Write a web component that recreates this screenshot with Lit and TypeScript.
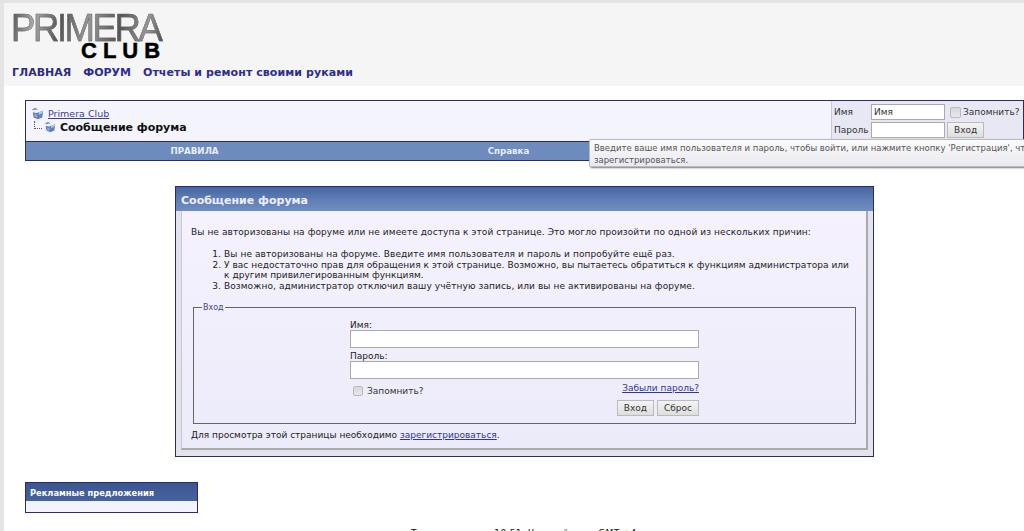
import { LitElement, html, css } from "lit";
import { customElement } from "lit/decorators.js";

const folder = html`<svg class="ico" viewBox="0 0 15 15" width="15" height="15"><path d="M1 3l4-2 3 2-3 2z" fill="#7f93b5"/><path d="M2 6l4 1 3-1 5-2-1 8-5 2-5-2z" fill="#5f83bd"/><path d="M9 6l5-2-1 3-4 2z" fill="#b9cbe6"/><path d="M3 4l3-1 3 2-3 1z" fill="#eef2fa"/><path d="M4 8l3 1v3l-3-1z" fill="#8eaad6"/></svg>`;

@customElement("app-root")
export class AppRoot extends LitElement {
  static styles = css`
    :host {
      display: block;
      height: 531px;
      overflow: hidden;
      background: #fff;
      font-family: "DejaVu Sans", Verdana, sans-serif;
      font-size: 9px;
      color: #222;
      box-sizing: border-box;
      position: relative;
      border-left: 4px solid #e4e4e4;
      border-top: 3px solid #e4e4e4;
    }
    a { color: #33339a; text-decoration: underline; }

    .head { background: #f5f5f5; height: 83px; padding: 10px 0 0 7px; box-sizing: border-box; margin-bottom: 14px; }
    .logo { width: 160px; height: 48px; box-sizing: border-box; padding-top: 1px; display: flex; flex-direction: column; font-family: "Liberation Sans", Arial, sans-serif; }
    .primera {
      font-size: 38px; line-height: 28px; letter-spacing: -2.5px; height: 28px; font-weight: 400;
      background: linear-gradient(100deg, #555 0%, #aaa 15%, #555 32%, #999 50%, #555 70%, #999 88%, #444 100%);
      -webkit-background-clip: text; background-clip: text; color: transparent; white-space: nowrap;
      -webkit-text-stroke: 0.5px #6a6a6a;
      transform: scaleX(0.96); transform-origin: left;
    }
    .club { font-size: 22px; font-weight: 700; line-height: 17px; letter-spacing: 6px; color: #000; margin-left: 70px; white-space: nowrap; -webkit-text-stroke: 0.5px #000; }
    .nav { display: flex; gap: 12px; margin: 5px 0 0 1px; font-size: 11px; font-weight: 700; color: #2d2d77; line-height: 14px; }
    .nav .light { color: #2d2d8e; }
    .nav .wide { letter-spacing: .07px; }

    .top { margin: 0 0 0 21px; width: 999px; border: 1px solid #2b2b66; box-sizing: border-box; }
    .crumb { display: flex; height: 40px; background: #f4f4fd; border-bottom: 1px solid #2b2b66; }
    .path { flex: 1; padding: 6px 0 0 5px; font-size: 9.5px; }
    .path a { color: #3f3f8f; }
    .row { display: flex; align-items: center; height: 13px; }
    .row .ico { margin-right: 4px; width: 13px; height: 13px; }
    .row2 { font-size: 11px; font-weight: 700; color: #111; margin-left: 3px; height: 14px; letter-spacing: -.03px; }
    .row2 .ico { margin-right: 4px; width: 12px; height: 12px; }
    .tree { width: 8px; height: 8px; border-left: 1px dotted #555; border-bottom: 1px dotted #555; margin: 0 2px 4px 0; box-sizing: border-box; }
    .login { width: 192px; background: #e8e8f5; border-left: 1px solid #c8c8d8; padding: 2px 0 0 2px; box-sizing: border-box; display: grid; grid-template-columns: 37px 74px auto; grid-auto-rows: 18px; align-items: center; color: #333; }
    .login input[type="text"] { width: 74px; height: 16px; }
    .login .cb { display: flex; align-items: center; gap: 2px; margin-left: 5px; white-space: nowrap; }
    .login .cb input { width: 11px; height: 11px; }
    input[type="text"] { box-sizing: border-box; border: 1px solid #aaa; background: #fff; padding: 0 2px; margin: 0; font: 9px "DejaVu Sans", sans-serif; color: #333; }
    input[type="checkbox"] { appearance: none; -webkit-appearance: none; margin: 0; width: 10px; height: 10px; box-sizing: border-box; border: 1px solid #b8b8c0; border-radius: 2px; background: linear-gradient(#d8d8dc, #e8e8ec); }
    .btn { box-sizing: border-box; border: 1px solid #bbb; background: linear-gradient(#f4f4f4, #dedede); height: 16px; padding: 0 6px; font: 9px "DejaVu Sans", sans-serif; color: #333; margin: 0; }
    .login .btn { margin-left: 2px; width: 37px; }
    .menu { display: grid; grid-template-columns: 337px 291px 1fr; background: #6d8bbd; height: 18px; color: #e8eef8; font-weight: 700; font-size: 8.7px; line-height: 18px; text-align: center; }

    .tip {
      position: absolute; left: 585px; top: 136px; width: 500px; height: 28px; box-sizing: border-box;
      padding: 2px 4px; background: linear-gradient(#fbfbfb, #e9e9f0); border: 1px solid #bbb; border-radius: 2px 0 0 2px;
      box-shadow: 1px 1px 2px #777; line-height: 12px; color: #555; font-size: 8.5px; white-space: nowrap;
    }

    .panel { width: 699px; margin: 25px 0 0 171px; border: 1px solid #2b2b66; box-sizing: border-box; background: #e3e3ee; height: 271px; }
    .panel-h { height: 24px; line-height: 27px; padding-left: 5px; background: linear-gradient(#4565a2, #5f7cb4 50%, #6f8ec4); color: #eef; font-size: 11px; font-weight: 700; }
    .panel-b { margin: 0 5px; background: linear-gradient(#f5f2fe, #ecebf9); height: 239px; box-sizing: border-box; padding: 15px 10px 0 9px; border: 1px solid #c8c8d0; border-top: 0; border-bottom: 2px solid #aaa; border-right: 2px solid #aaa; }
    p { margin: 0; line-height: 12px; }
    .lead { letter-spacing: .085px; }
    ol { margin: 11px 0 0; padding: 0 0 0 33px; line-height: 10.7px; letter-spacing: .09px; }
    ol .second { letter-spacing: .04px; }
    fieldset { margin: 11px 0 0 2px; width: 663px; height: 121px; box-sizing: border-box; border: 1px solid #666; padding: 0; min-width: 0; position: relative; }
    legend { margin-left: 8px; padding: 0 1px; font-size: 8px; color: #44467a; line-height: 10px; }
    .form { margin: 7px 0 0 156px; width: 349px; }
    .form label { display: block; line-height: 10px; }
    .form input[type="text"] { display: block; width: 349px; height: 18px; margin-bottom: 3px; }
    .form-row { display: flex; justify-content: space-between; align-items: flex-start; height: 15px; }
    .form-row .cb { display: flex; align-items: center; gap: 4px; margin: 4px 0 0 3px; color: #333; }
    .form-row a { margin-top: 1px; }
    .buttons { display: flex; justify-content: flex-end; gap: 3px; margin-top: 3px; }
    .buttons .btn { height: 16px; padding: 0 6px; }
    .note { margin-top: 5px; }

    .ads { width: 173px; margin: 25px 0 0 21px; border: 1px solid #2b2b66; box-sizing: border-box; }
    .ads-h { height: 18px; line-height: 20px; padding-left: 4px; background: linear-gradient(#3a5590, #47639e); color: #fff; font-weight: 700; font-size: 8.3px; white-space: nowrap; }
    .ads-b { height: 11px; background: #f3f3fd; }
    .foot { position: absolute; top: 524px; left: 407px; width: 300px; font-size: 9px; line-height: 12px; color: #111; white-space: nowrap; letter-spacing: .3px; }
  `;

  render() {
    return html`
      <div class="head">
        <div class="logo">
          <div class="primera">PRIMERA</div>
          <div class="club">CLUB</div>
        </div>
        <div class="nav"><span>ГЛАВНАЯ</span><span class="light">ФОРУМ</span><span class="light wide">Отчеты и ремонт своими руками</span></div>
      </div>

      <div class="top">
        <div class="crumb">
          <div class="path">
            <div class="row">${folder}<a href="#">Primera Club</a></div>
            <div class="row row2"><span class="tree"></span>${folder}<span>Сообщение форума</span></div>
          </div>
          <div class="login">
            <span>Имя</span><input type="text" value="Имя" />
            <span class="cb"><input type="checkbox" />Запомнить?</span>
            <span>Пароль</span><input type="text" />
            <span><button class="btn">Вход</button></span>
          </div>
        </div>
        <div class="menu"><span>ПРАВИЛА</span><span>Справка</span><span></span></div>
      </div>

      <div class="tip">Введите ваше имя пользователя и пароль, чтобы войти, или нажмите кнопку 'Регистрация', чтобы<br />зарегистрироваться.</div>

      <div class="panel">
        <div class="panel-h">Сообщение форума</div>
        <div class="panel-b">
          <p class="lead">Вы не авторизованы на форуме или не имеете доступа к этой странице. Это могло произойти по одной из нескольких причин:</p>
          <ol>
            <li>Вы не авторизованы на форуме. Введите имя пользователя и пароль и попробуйте ещё раз.</li>
            <li class="second">У вас недостаточно прав для обращения к этой странице. Возможно, вы пытаетесь обратиться к функциям администратора или к другим привилегированным функциям.</li>
            <li>Возможно, администратор отключил вашу учётную запись, или вы не активированы на форуме.</li>
          </ol>
          <fieldset>
            <legend>Вход</legend>
            <div class="form">
              <label>Имя:</label><input type="text" />
              <label>Пароль:</label><input type="text" />
              <div class="form-row">
                <span class="cb"><input type="checkbox" />Запомнить?</span>
                <a href="#">Забыли пароль?</a>
              </div>
              <div class="buttons"><button class="btn">Вход</button><button class="btn">Сброс</button></div>
            </div>
          </fieldset>
          <p class="note">Для просмотра этой страницы необходимо <a href="#">зарегистрироваться</a>.</p>
        </div>
      </div>

      <div class="ads">
        <div class="ads-h">Рекламные предложения</div>
        <div class="ads-b"></div>
      </div>
      <div class="foot">Текущее время: 10:51. Часовой пояс GMT +4.</div>
    `;
  }
}
